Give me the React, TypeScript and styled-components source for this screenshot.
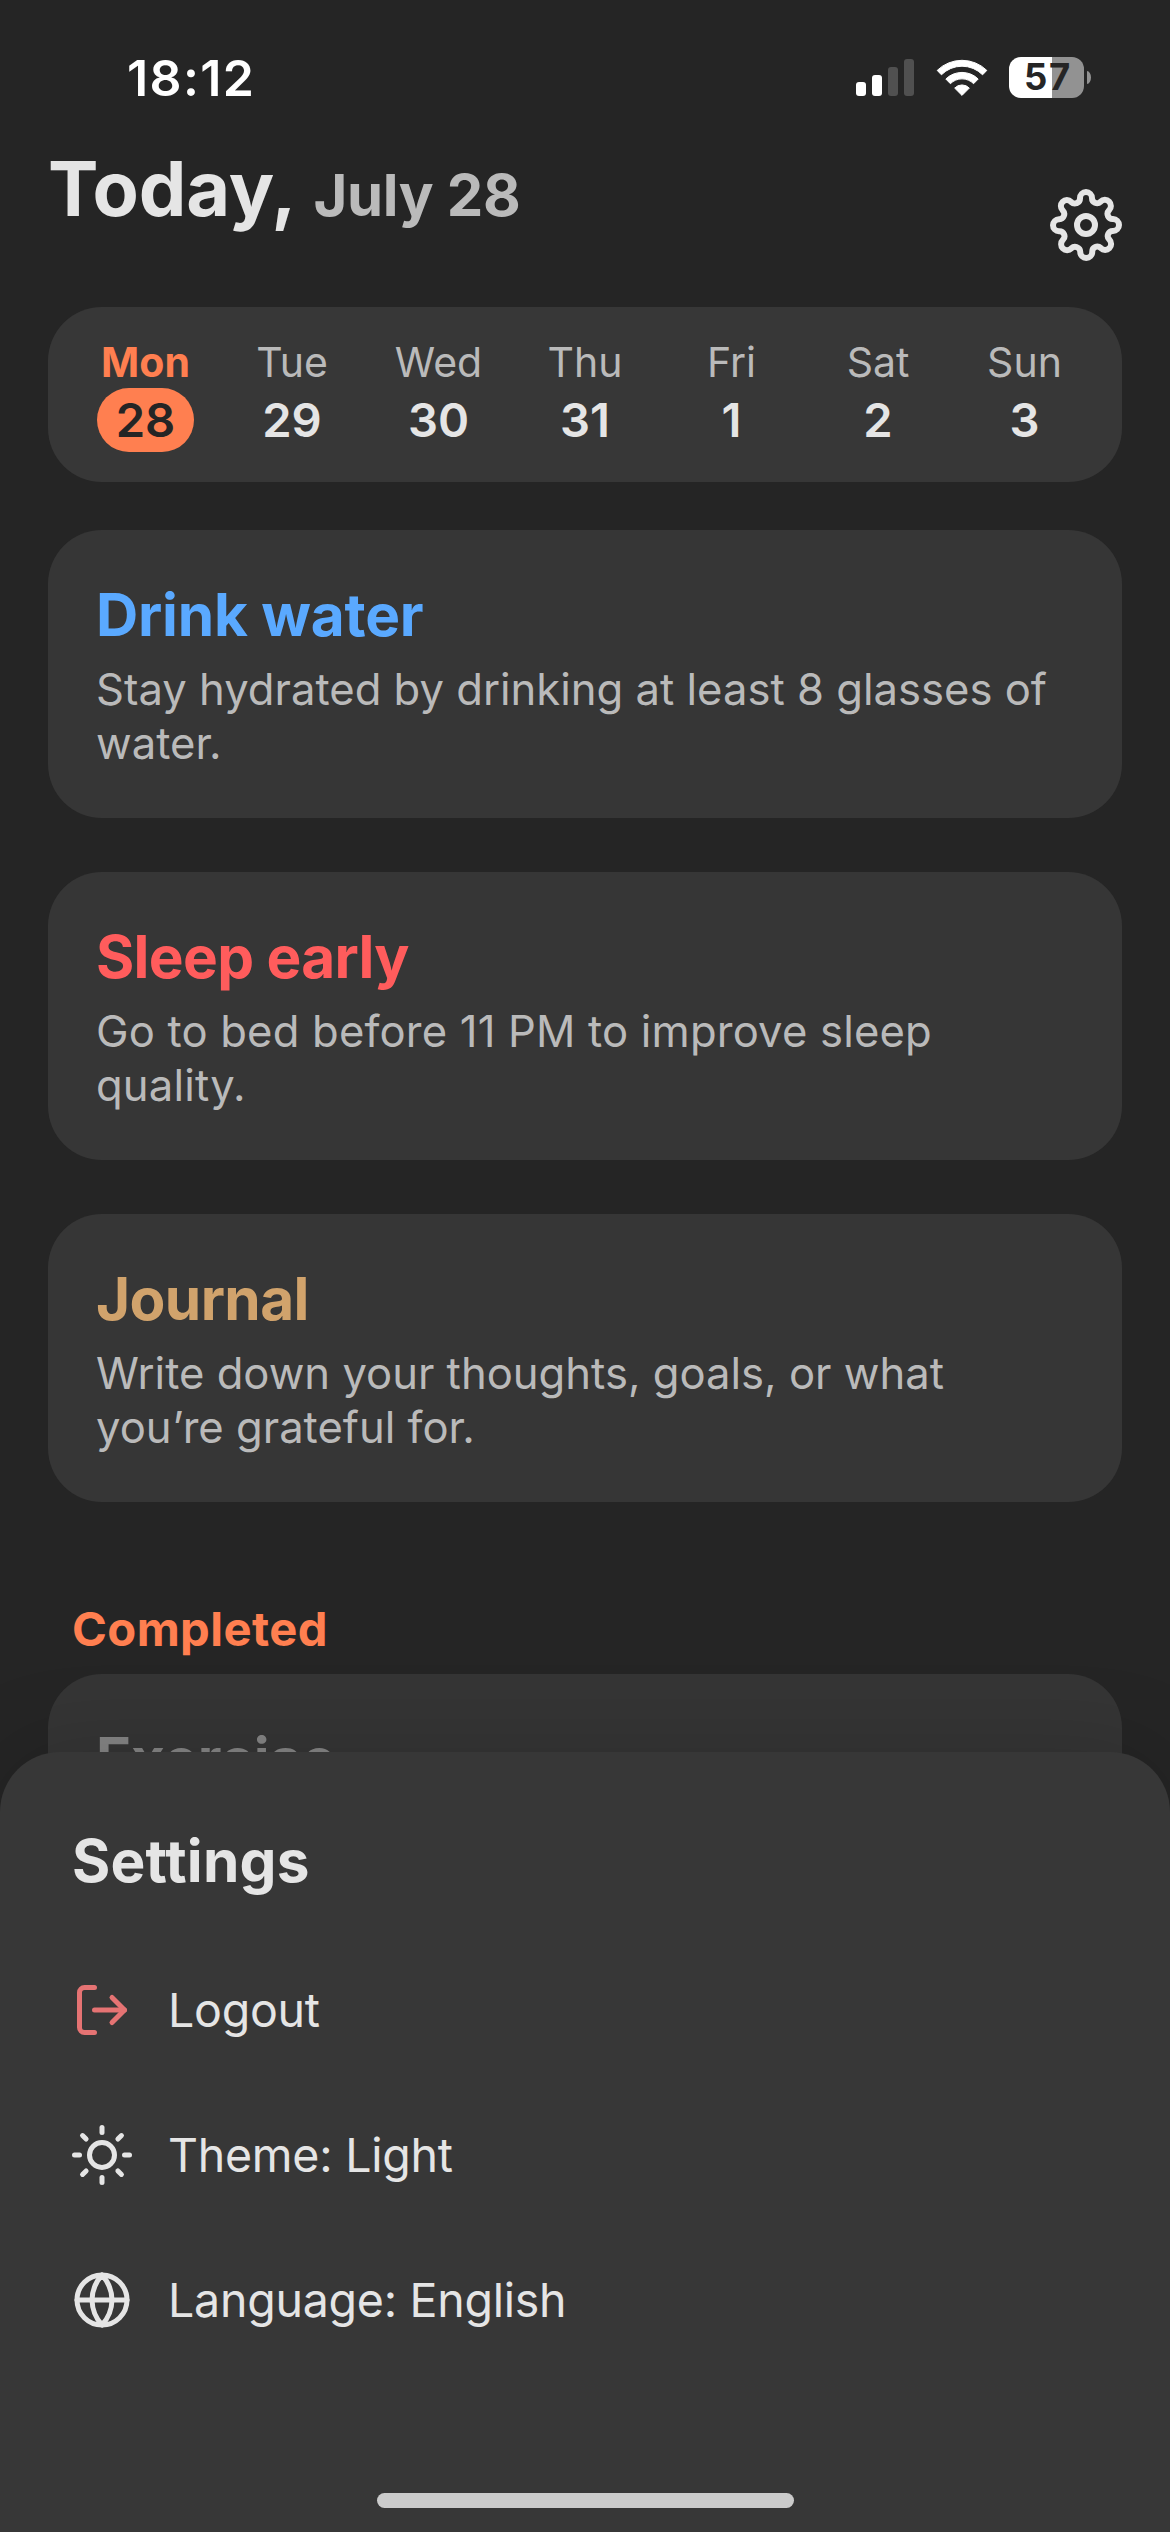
import React from "react";
import styled, { createGlobalStyle } from "styled-components";
import { FiGlobe, FiLogOut, FiSettings, FiSun } from "react-icons/fi";

const color = {
  background: "#252525",
  card: "#363636",
  week: "#373737",
  sheet: "#373737",
  text: "#e5e5e5",
  muted: "#bababa",
  accent: "#ff7f50",
  danger: "#e57373",
};

const GlobalStyle = createGlobalStyle`
  * { box-sizing: border-box; }
  body {
    margin: 0;
    background: ${color.background};
    font-family: Inter, "Liberation Sans", sans-serif;
    font-kerning: normal;
  }
`;

const Screen = styled.div`
  position: relative;
  width: 1170px;
  height: 2532px;
  overflow: hidden;
  background: ${color.background};
  color: ${color.text};
`;

const StatusBar = styled.div`
  display: flex;
  align-items: center;
  justify-content: space-between;
  height: 144px;
  padding: 11px 79px 0 127px;
`;

const Clock = styled.span`
  font-size: 50px;
  line-height: 60px;
  font-weight: 600;
  letter-spacing: 1.39px;
  color: #fff;
`;

const StatusIcons = styled.div`
  display: flex;
  align-items: center;
`;

const SignalBars = styled.div`
  display: flex;
  align-items: flex-end;
  gap: 6px;
  height: 37px;
  margin-right: 22px;
`;

const SignalBar = styled.span<{ $height: number; $on: boolean }>`
  width: 10px;
  height: ${(p) => p.$height}px;
  border-radius: 3px;
  background: ${(p) => (p.$on ? "#fff" : "#505050")};
`;

const WifiGlyph = styled.svg`
  display: block;
  width: 52px;
  height: 38px;
  margin-right: 21px;
`;

const BatteryBody = styled.div`
  width: 75px;
  height: 41px;
  padding-left: 15px;
  border-radius: 12px;
  background: linear-gradient(90deg, #fff 43px, #929292 43px);
  color: ${color.background};
  font-size: 36.5px;
  line-height: 41px;
  font-weight: 700;
  letter-spacing: 1.6px;
`;

const BatteryTip = styled.span`
  width: 4px;
  height: 13px;
  margin-left: 3px;
  border-radius: 0 4px 4px 0 / 0 6.5px 6.5px 0;
  background: #929292;
`;

const Header = styled.header`
  display: flex;
  align-items: flex-start;
  justify-content: space-between;
  height: 163px;
  padding: 0 48px;
`;

const DateTitle = styled.h1`
  display: flex;
  align-items: baseline;
  margin: 0;
  line-height: 90px;
  font-weight: 700;
  white-space: nowrap;
`;

const Today = styled.span`
  width: 265.5px;
  font-size: 75.6px;
  letter-spacing: -0.09px;
`;

const DateText = styled.span`
  font-size: 58px;
  letter-spacing: -0.33px;
  color: ${color.muted};
`;

const SettingsButton = styled.button`
  display: flex;
  margin: 45px 0 0;
  padding: 0;
  border: 0;
  background: none;
  color: ${color.text};
  font-size: 72px;
`;

const Main = styled.main`
  padding: 0 48px;
`;

const Week = styled.section`
  display: flex;
  justify-content: space-between;
  height: 175px;
  padding: 30px 49px 0;
  border-radius: 54px;
  background: ${color.week};
`;

const Day = styled.div`
  display: flex;
  flex-direction: column;
  align-items: center;
  width: 97px;
`;

const DayName = styled.span<{ $active: boolean }>`
  margin-bottom: 1px;
  font-size: 41px;
  line-height: 50px;
  font-weight: ${(p) => (p.$active ? 700 : 400)};
  color: ${(p) => (p.$active ? color.accent : color.muted)};
`;

const DayNumber = styled.span<{ $active: boolean }>`
  width: 97px;
  height: 64px;
  border-radius: 32px;
  background: ${(p) => (p.$active ? color.accent : "transparent")};
  color: ${(p) => (p.$active ? color.background : color.text)};
  font-size: 47.2px;
  line-height: 64px;
  font-weight: 600;
  text-align: center;
`;

const HabitList = styled.section`
  display: flex;
  flex-direction: column;
  gap: 54px;
  margin-top: 48px;
`;

const HabitCard = styled.article<{ $done?: boolean }>`
  height: 288px;
  padding: 48px;
  border-radius: 54px;
  background: ${(p) => (p.$done ? "#353535" : color.card)};
`;

const HabitTitle = styled.h2<{ $color: string; $spacing: number }>`
  margin: 0 0 11px;
  font-size: 58.5px;
  line-height: 74px;
  font-weight: 700;
  letter-spacing: ${(p) => p.$spacing}px;
  color: ${(p) => p.$color};
`;

const HabitText = styled.p<{ $spacing: number }>`
  margin: 0;
  font-size: 43.6px;
  line-height: 54px;
  letter-spacing: ${(p) => p.$spacing}px;
  color: ${color.muted};
`;

const CompletedLabel = styled.h3`
  margin: 98px 0 16px 24px;
  font-size: 47.2px;
  line-height: 58px;
  font-weight: 700;
  letter-spacing: 0.4px;
  color: ${color.accent};
`;

const Sheet = styled.aside`
  position: absolute;
  inset: 1752px 0 0;
  display: flex;
  flex-direction: column;
  padding: 73px 72px 24px;
  border-radius: 60px 60px 0 0;
  background: ${color.sheet};
  box-shadow: 0 0 90px rgba(0, 0, 0, 0.17);
`;

const SheetTitle = styled.h2`
  margin: 0 0 83px;
  font-size: 58.5px;
  line-height: 72px;
  font-weight: 700;
  letter-spacing: 0.22px;
`;

const Options = styled.div`
  display: flex;
  flex-direction: column;
  gap: 85px;
`;

const Option = styled.button<{ $iconColor: string }>`
  display: flex;
  align-items: center;
  gap: 36px;
  height: 60px;
  padding: 0;
  border: 0;
  background: none;
  color: ${color.text};
  font: 400 46.5px/60px Inter, "Liberation Sans", sans-serif;
  letter-spacing: -0.25px;

  svg {
    width: 60px;
    height: 60px;
    color: ${(p) => p.$iconColor};
  }
`;

const HomeIndicator = styled.div`
  align-self: center;
  width: 417px;
  height: 15px;
  margin-top: auto;
  border-radius: 8px;
  background: #cbcbcb;
`;

const days = [
  { name: "Mon", number: 28 },
  { name: "Tue", number: 29 },
  { name: "Wed", number: 30 },
  { name: "Thu", number: 31 },
  { name: "Fri", number: 1 },
  { name: "Sat", number: 2 },
  { name: "Sun", number: 3 },
];

const habits = [
  {
    title: "Drink water",
    titleSpacing: -0.2,
    tint: "#5aa9ff",
    text: "Stay hydrated by drinking at least 8 glasses of water.",
    textSpacing: 0,
  },
  {
    title: "Sleep early",
    titleSpacing: -0.68,
    tint: "#ff5c5c",
    text: "Go to bed before 11 PM to improve sleep quality.",
    textSpacing: 0.18,
  },
  {
    title: "Journal",
    titleSpacing: -0.6,
    tint: "#d1a36c",
    text: "Write down your thoughts, goals, or what you’re grateful for.",
    textSpacing: 0,
  },
];

const signal = [
  { height: 14, on: true },
  { height: 21, on: true },
  { height: 29, on: false },
  { height: 37, on: false },
];

function Wifi() {
  return (
    <WifiGlyph viewBox="-26 -36 52 38" fill="#fff" stroke="#fff" strokeWidth="1" strokeLinejoin="round">
      <path d="M-24.8-24.6A35.5 35.5 0 0 1 24.8-24.6L20.6-20.2A29 29 0 0 0-20.6-20.2Z" />
      <path d="M-16.2-16A23.2 23.2 0 0 1 16.2-16L11.6-11.3A16.3 16.3 0 0 0-11.6-11.3Z" />
      <path d="M-7.3-6.9A10 10 0 0 1 7.3-6.9L0 .4Z" />
    </WifiGlyph>
  );
}

export default function App() {
  return (
    <Screen>
      <GlobalStyle />
      <StatusBar>
        <Clock>18:12</Clock>
        <StatusIcons>
          <SignalBars>
            {signal.map((bar) => (
              <SignalBar key={bar.height} $height={bar.height} $on={bar.on} />
            ))}
          </SignalBars>
          <Wifi />
          <BatteryBody>57</BatteryBody>
          <BatteryTip />
        </StatusIcons>
      </StatusBar>

      <Header>
        <DateTitle>
          <Today>Today,</Today>
          <DateText>July 28</DateText>
        </DateTitle>
        <SettingsButton aria-label="Settings">
          <FiSettings />
        </SettingsButton>
      </Header>

      <Main>
        <Week>
          {days.map((day, index) => (
            <Day key={day.name}>
              <DayName $active={index === 0}>{day.name}</DayName>
              <DayNumber $active={index === 0}>{day.number}</DayNumber>
            </Day>
          ))}
        </Week>

        <HabitList>
          {habits.map((habit) => (
            <HabitCard key={habit.title}>
              <HabitTitle $color={habit.tint} $spacing={habit.titleSpacing}>
                {habit.title}
              </HabitTitle>
              <HabitText $spacing={habit.textSpacing}>{habit.text}</HabitText>
            </HabitCard>
          ))}
        </HabitList>

        <CompletedLabel>Completed</CompletedLabel>
        <HabitCard $done>
          <HabitTitle $color="#858585" $spacing={-0.45}>
            Exercise
          </HabitTitle>
        </HabitCard>
      </Main>

      <Sheet>
        <SheetTitle>Settings</SheetTitle>
        <Options>
          <Option $iconColor={color.danger}>
            <FiLogOut />
            Logout
          </Option>
          <Option $iconColor={color.text}>
            <FiSun />
            Theme: Light
          </Option>
          <Option $iconColor={color.text}>
            <FiGlobe />
            Language: English
          </Option>
        </Options>
        <HomeIndicator />
      </Sheet>
    </Screen>
  );
}
